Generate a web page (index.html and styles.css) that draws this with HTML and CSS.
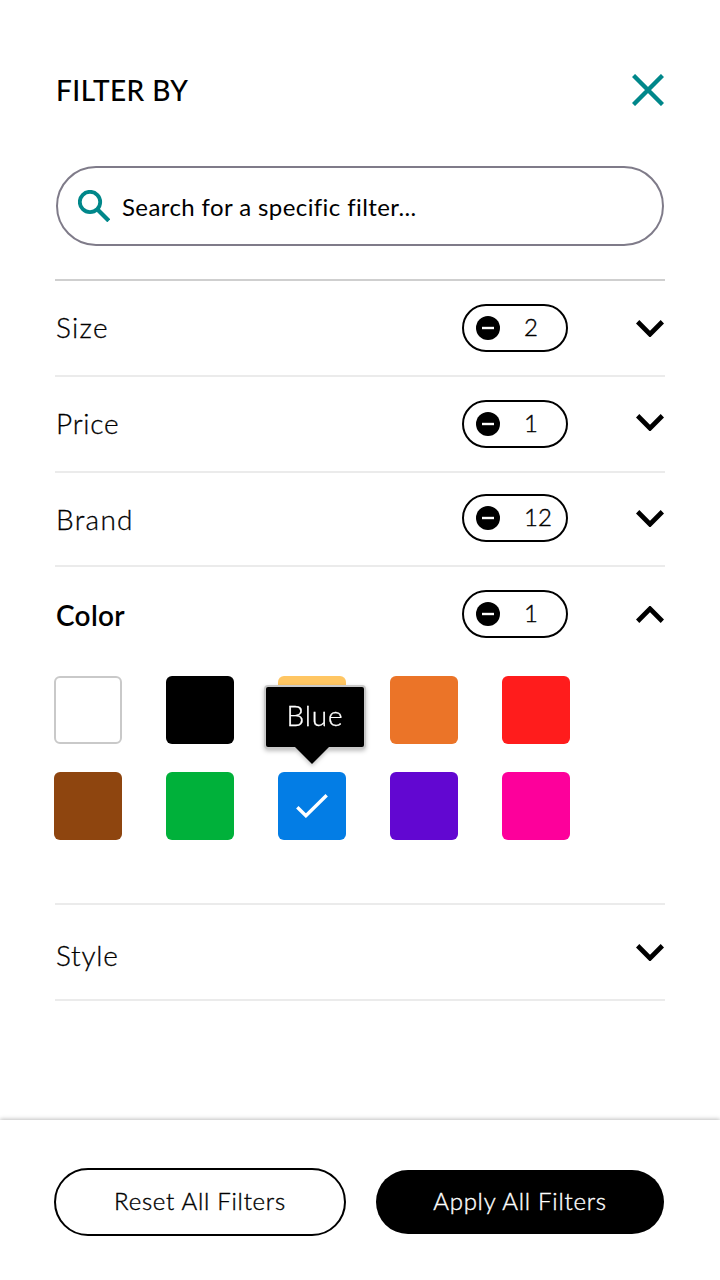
FILE: index.html
```html
<!DOCTYPE html>
<html lang="en">
<head>
<meta charset="utf-8">
<title>Filter by</title>
<link rel="stylesheet" href="styles.css">
</head>
<body>
<svg class="sprite" width="0" height="0">
  <symbol id="down" viewBox="0 0 28 17"><path d="M1.6 1.8 14 14.2 26.4 1.8" fill="none" stroke="#000" stroke-width="4.8"/></symbol>
  <symbol id="up" viewBox="0 0 28 17"><path d="M1.6 15.2 14 2.8 26.4 15.2" fill="none" stroke="#000" stroke-width="4.8"/></symbol>
  <symbol id="minus" viewBox="0 0 24 24"><circle cx="12" cy="12" r="12"/><path d="M6 12h12" stroke="#fff" stroke-width="2.4"/></symbol>
</svg>
<div class="screen">
  <main class="panel">
    <header class="top">
      <h1 class="title"><span>FILTER BY</span></h1>
      <svg class="close" viewBox="0 0 32 32"><path d="M1.5 1.5l29 29M30.5 1.5l-29 29" stroke="#00878a" stroke-width="4.4"/></svg>
    </header>
    <div class="search">
      <svg class="glass" viewBox="0 0 32 32" fill="none" stroke="#00878a"><circle cx="12" cy="12" r="10.2" stroke-width="3.8"/><path d="M20 20l10.8 10.8" stroke-width="4.2"/></svg>
      <span class="search-text">Search for a specific filter...</span>
    </div>
    <div class="sections">
      <section class="section size">
        <span class="label">Size</span>
        <span class="pill"><svg class="minus"><use href="#minus"/></svg><span>2</span></span>
        <svg class="chevron"><use href="#down"/></svg>
      </section>
      <section class="section price">
        <span class="label">Price</span>
        <span class="pill"><svg class="minus"><use href="#minus"/></svg><span>1</span></span>
        <svg class="chevron"><use href="#down"/></svg>
      </section>
      <section class="section brand">
        <span class="label">Brand</span>
        <span class="pill"><svg class="minus"><use href="#minus"/></svg><span>12</span></span>
        <svg class="chevron"><use href="#down"/></svg>
      </section>
      <section class="section color">
        <span class="label">Color</span>
        <span class="pill"><svg class="minus"><use href="#minus"/></svg><span>1</span></span>
        <svg class="chevron"><use href="#up"/></svg>
        <div class="swatches">
          <span class="swatch white"></span>
          <span class="swatch black"></span>
          <span class="swatch yellow"></span>
          <span class="swatch orange"></span>
          <span class="swatch red"></span>
          <span class="swatch brown"></span>
          <span class="swatch green"></span>
          <span class="swatch blue">
            <svg class="check" viewBox="0 0 32 24"><path d="M1.3 13.2l8.6 8.5L30.7 1.2" fill="none" stroke="#fff" stroke-width="3.4"/></svg>
            <span class="tooltip"><span>Blue</span></span>
          </span>
          <span class="swatch purple"></span>
          <span class="swatch pink"></span>
        </div>
      </section>
      <section class="section style">
        <span class="label">Style</span>
        <svg class="chevron"><use href="#down"/></svg>
      </section>
    </div>
  </main>
  <footer class="actions">
    <button class="btn reset"><span>Reset All Filters</span></button>
    <button class="btn apply"><span>Apply All Filters</span></button>
  </footer>
</div>
</body>
</html>
```
FILE: styles.css
```css
* { box-sizing: border-box; }
body {
  margin: 0;
  background: #fff;
  color: #000;
  font-family: Muli, Lato, "Open Sans", sans-serif;
}
.sprite { display: block; height: 0; }
.screen { display: flex; flex-direction: column; width: 720px; height: 1280px; overflow: hidden; }
.panel { flex: 1; padding: 70px 55px 0; }
.top { display: flex; justify-content: space-between; align-items: center; height: 40px; padding: 0 1px; }
.title { margin: 0; font-size: 28px; font-weight: 500; line-height: 39px; letter-spacing: .45px; }
.close { width: 32px; height: 32px; }
.search {
  display: flex;
  align-items: center;
  height: 80px;
  margin: 56px 1px 33px;
  padding-left: 20px;
  border: 2px solid #7f7b89;
  border-radius: 40px;
}
.glass { width: 32px; height: 32px; }
.search-text { margin: 1px 0 0 12px; font-size: 24px; letter-spacing: .4px; white-space: nowrap; }
.section {
  display: grid;
  grid-template-columns: 407px 106px 28px;
  column-gap: 0;
  align-content: start;
  align-items: start;
  height: 96px;
  border-top: 2px solid #ebebeb;
}
.size { border-top-color: #cfcfcf; }
.brand { height: 94px; }
.color { height: 338px; grid-template-rows: 109px auto; }
.style { height: 98px; border-bottom: 2px solid #ebebeb; }
.label {
  margin-top: 28px;
  padding-left: 1px;
  font-size: 28px;
  line-height: 36px;
  font-weight: 300;
  letter-spacing: .75px;
  -webkit-text-stroke: .3px;
}
.size .label, .brand .label { letter-spacing: 1.3px; }
.color .label { margin-top: 30px; font-weight: 600; letter-spacing: .3px; -webkit-text-stroke: 0; }
.style .label { margin-top: 32px; }
.pill {
  display: flex;
  align-items: center;
  height: 48px;
  margin-top: 23px;
  padding-left: 12px;
  border: 2px solid #000;
  border-radius: 24px;
  font-size: 24px;
  font-weight: 300;
  line-height: 44px;
  -webkit-text-stroke: .4px;
}
.brand .pill { margin-top: 21px; }
.pill span { margin: 0 0 2px 24px; line-height: 42px; }
.minus { width: 24px; height: 24px; -webkit-text-stroke: 0; }
.chevron { grid-column: 3; width: 28px; height: 17px; margin: 39px 0 0 68px; }
.price .chevron, .brand .chevron { margin-top: 37px; }
.swatches {
  grid-column: 1 / -1;
  display: grid;
  grid-template-columns: repeat(5, 68px);
  grid-auto-rows: 68px;
  gap: 28px 44px;
  margin-left: -1px;
}
.swatch { border-radius: 6px; }
.white { border: 2px solid #c9c9c9; }
.black { background: #000; }
.yellow { background: #ffc663; }
.orange { background: #eb7428; }
.red { background: #ff1c1c; }
.brown { background: #8e450f; }
.green { background: #00b13a; }
.blue { position: relative; display: grid; place-items: center; background: #037de5; }
.purple { background: #6207d1; }
.pink { background: #fd009b; }
.check { width: 32px; height: 24px; }
.tooltip {
  position: absolute;
  left: -12px;
  top: -85px;
  width: 98px;
  height: 60px;
  border-radius: 2px;
  background: #000;
  box-shadow: 0 0 0 2px #c9c9c9;
  color: #fff;
  font-size: 28px;
  font-weight: 300;
  line-height: 57px;
  letter-spacing: .9px;
  text-align: center;
  -webkit-text-stroke: .3px;
  filter: drop-shadow(0 2px 2px rgba(0, 0, 0, .25));
}
.tooltip::after {
  content: "";
  position: absolute;
  left: 29px;
  top: 60px;
  border: 17.5px solid transparent;
  border-top-color: #000;
  border-bottom: 0;
}
.actions {
  display: flex;
  align-items: center;
  gap: 30px;
  height: 160px;
  padding: 4px 56px 0 54px;
  background: #fff;
  box-shadow: 0 -1px 4px rgba(0, 0, 0, .25);
}
.btn {
  padding: 0 0 4px;
  font-family: inherit;
  font-size: 24px;
  font-weight: 300;
  letter-spacing: .75px;
  -webkit-text-stroke: .4px;
}
.reset { width: 292px; height: 68px; border: 2px solid #000; border-radius: 34px; background: #fff; color: #000; }
.apply { width: 288px; height: 64px; border: 0; border-radius: 32px; background: #000; color: #fff; }
```
